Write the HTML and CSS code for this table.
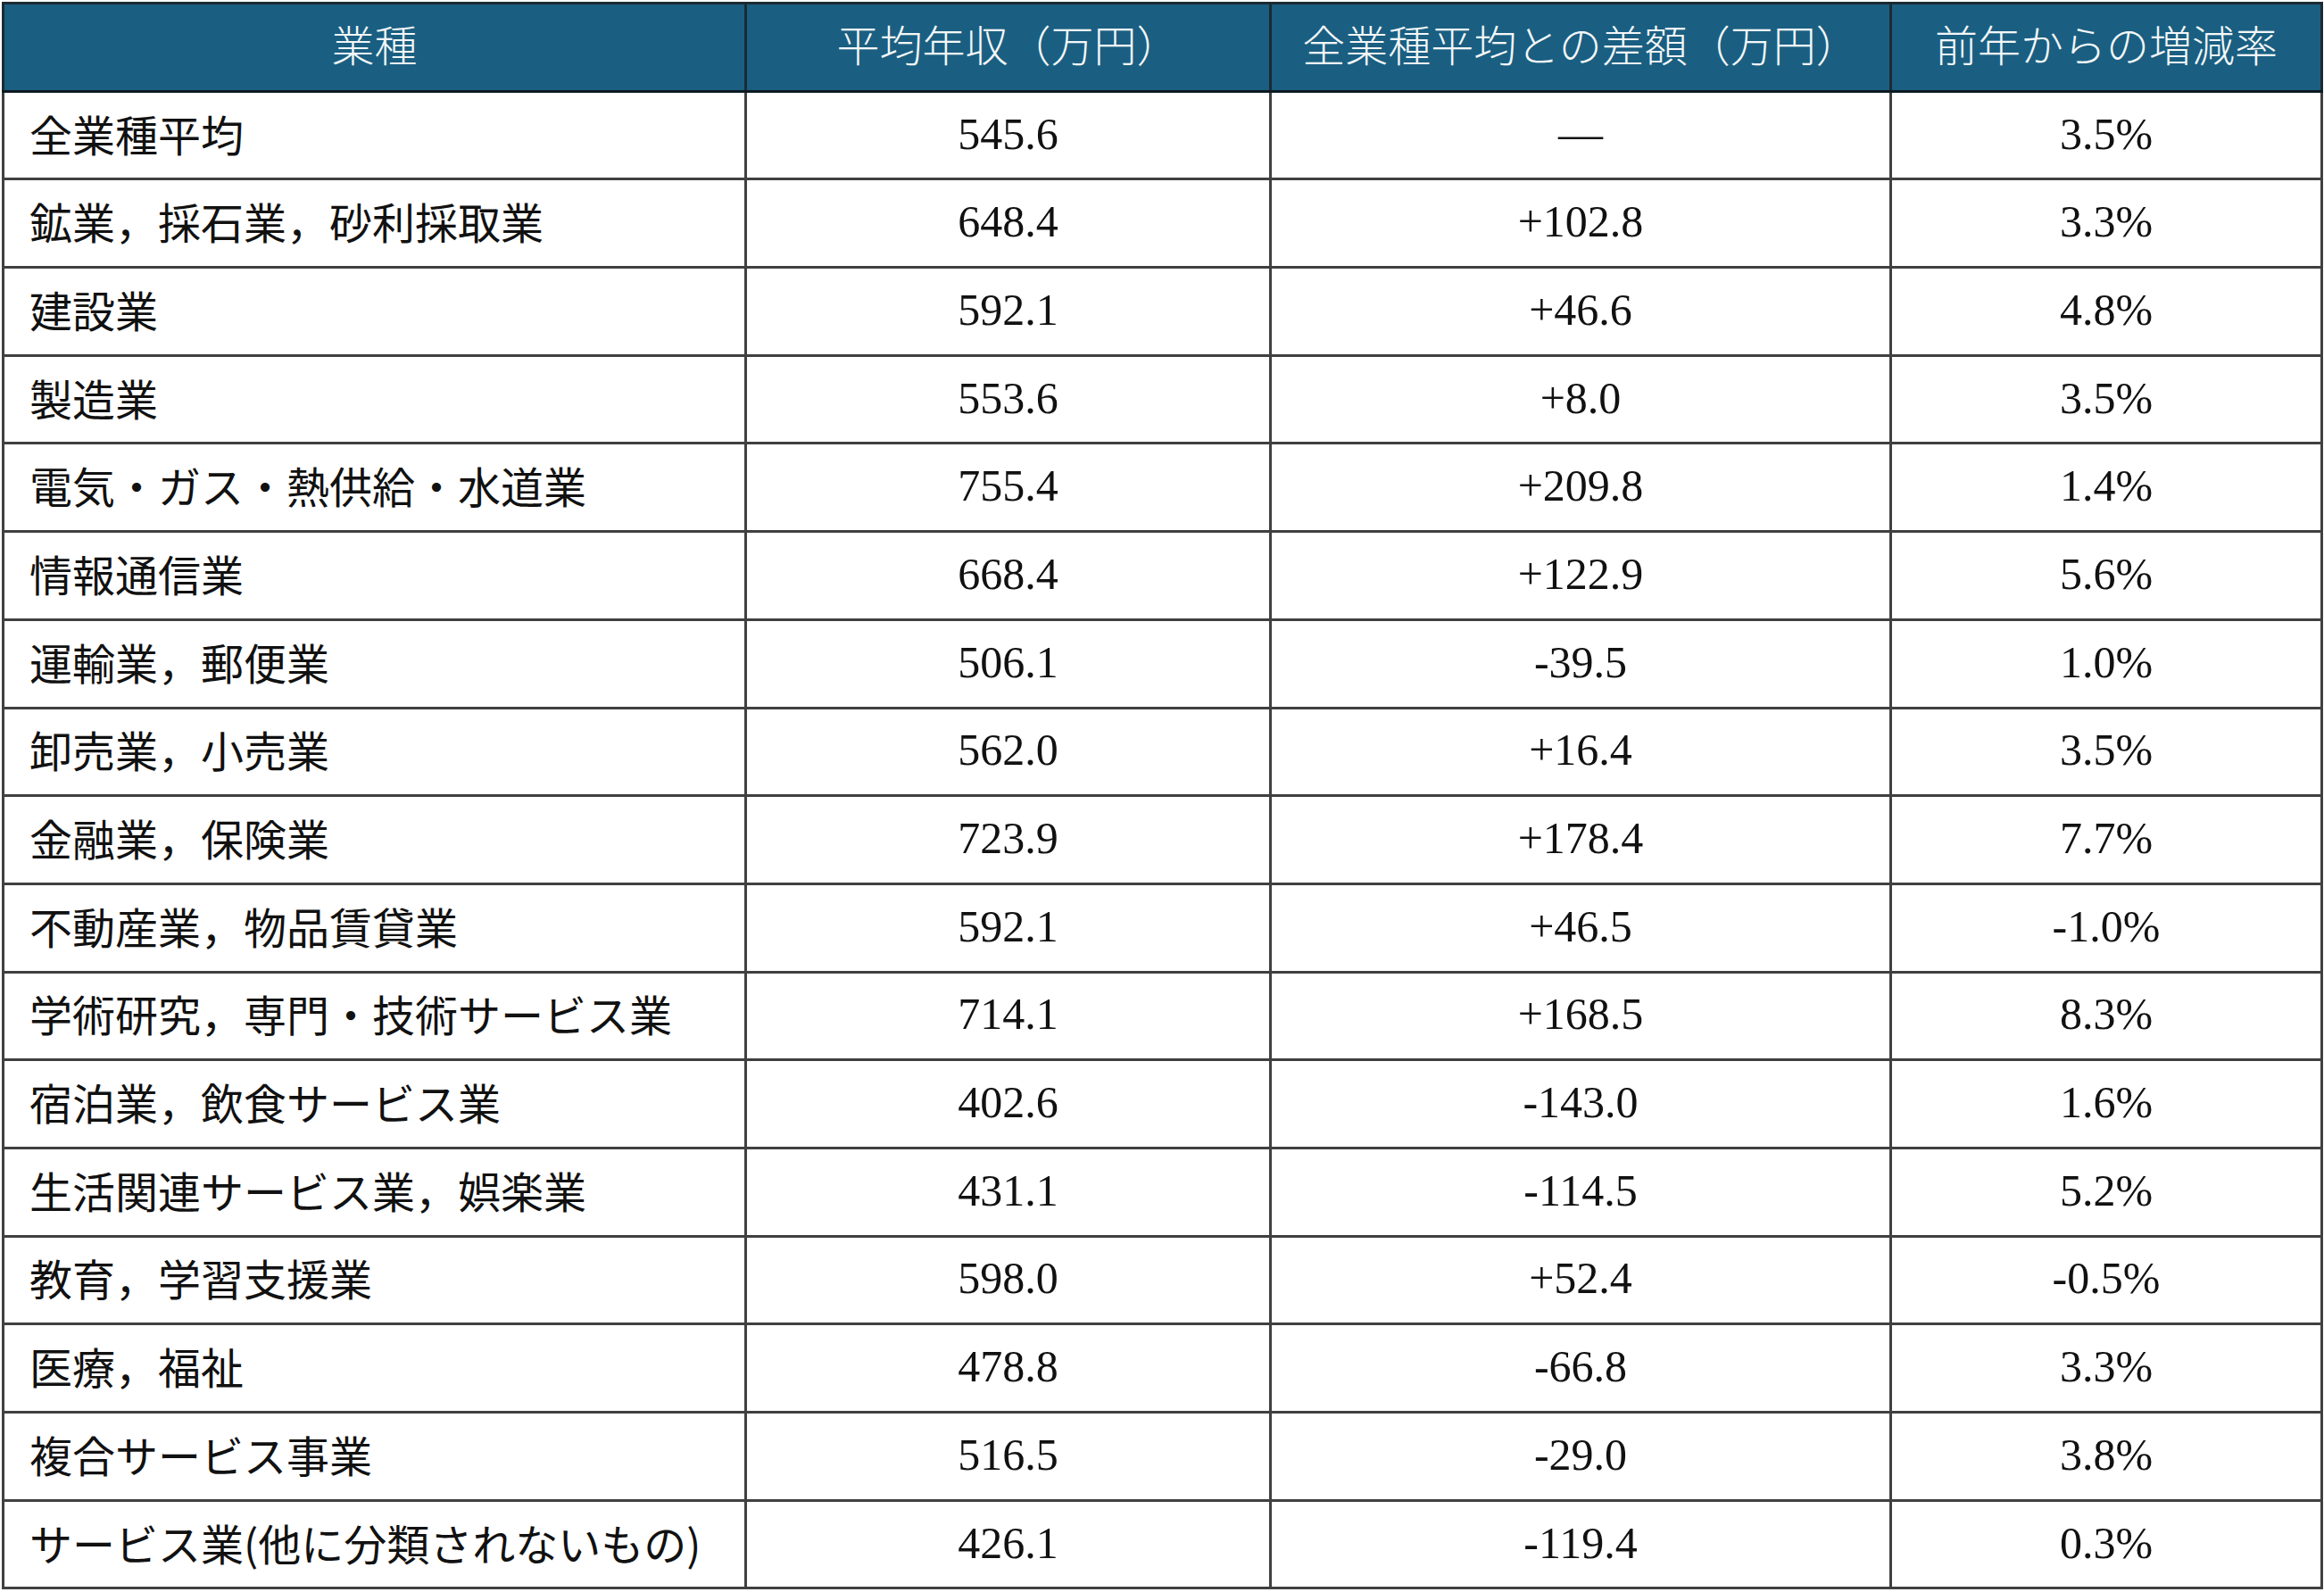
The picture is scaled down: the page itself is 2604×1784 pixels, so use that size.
FILE: index.html
```html
<!DOCTYPE html>
<html lang="ja">
<head>
<meta charset="utf-8">
<title>業種別平均年収</title>
<link rel="stylesheet" href="styles.css">
</head>
<body>
<table class="salary">
  <colgroup>
    <col class="c1"><col class="c2"><col class="c3"><col class="c4">
  </colgroup>
  <thead>
    <tr><th>業種</th><th>平均年収（万円）</th><th>全業種平均との差額（万円）</th><th>前年からの増減率</th></tr>
  </thead>
  <tbody>
    <tr><td class="name">全業種平均</td><td class="num">545.6</td><td class="num">—</td><td class="num">3.5%</td></tr>
    <tr><td class="name">鉱業，採石業，砂利採取業</td><td class="num">648.4</td><td class="num">+102.8</td><td class="num">3.3%</td></tr>
    <tr><td class="name">建設業</td><td class="num">592.1</td><td class="num">+46.6</td><td class="num">4.8%</td></tr>
    <tr><td class="name">製造業</td><td class="num">553.6</td><td class="num">+8.0</td><td class="num">3.5%</td></tr>
    <tr><td class="name">電気・ガス・熱供給・水道業</td><td class="num">755.4</td><td class="num">+209.8</td><td class="num">1.4%</td></tr>
    <tr><td class="name">情報通信業</td><td class="num">668.4</td><td class="num">+122.9</td><td class="num">5.6%</td></tr>
    <tr><td class="name">運輸業，郵便業</td><td class="num">506.1</td><td class="num">-39.5</td><td class="num">1.0%</td></tr>
    <tr><td class="name">卸売業，小売業</td><td class="num">562.0</td><td class="num">+16.4</td><td class="num">3.5%</td></tr>
    <tr><td class="name">金融業，保険業</td><td class="num">723.9</td><td class="num">+178.4</td><td class="num">7.7%</td></tr>
    <tr><td class="name">不動産業，物品賃貸業</td><td class="num">592.1</td><td class="num">+46.5</td><td class="num">-1.0%</td></tr>
    <tr><td class="name">学術研究，専門・技術サービス業</td><td class="num">714.1</td><td class="num">+168.5</td><td class="num">8.3%</td></tr>
    <tr><td class="name">宿泊業，飲食サービス業</td><td class="num">402.6</td><td class="num">-143.0</td><td class="num">1.6%</td></tr>
    <tr><td class="name">生活関連サービス業，娯楽業</td><td class="num">431.1</td><td class="num">-114.5</td><td class="num">5.2%</td></tr>
    <tr><td class="name">教育，学習支援業</td><td class="num">598.0</td><td class="num">+52.4</td><td class="num">-0.5%</td></tr>
    <tr><td class="name">医療，福祉</td><td class="num">478.8</td><td class="num">-66.8</td><td class="num">3.3%</td></tr>
    <tr><td class="name">複合サービス事業</td><td class="num">516.5</td><td class="num">-29.0</td><td class="num">3.8%</td></tr>
    <tr><td class="name">サービス業(他に分類されないもの)</td><td class="num">426.1</td><td class="num">-119.4</td><td class="num">0.3%</td></tr>
  </tbody>
</table>
</body>
</html>
```

FILE: styles.css
```css
html, body {
  margin: 0;
  padding: 0;
  background: #ffffff;
}

body {
  padding: 2px 0 0 2px;
}

.salary {
  border-collapse: collapse;
  table-layout: fixed;
  width: 2598px;
  font-family: "Liberation Serif", "Noto Sans CJK JP", serif;
  color: #111111;
}

.c1 { width: 832px; }
.c2 { width: 588px; }
.c3 { width: 695px; }
.c4 { width: 483px; }

.salary tr {
  height: 98.7px;
}

.salary th,
.salary td {
  border: 3px solid #404040;
  padding: 0 0 6px 0;
  vertical-align: middle;
  white-space: nowrap;
}

.salary th {
  background: #1a5f81;
  color: #f4f7f9;
  font-family: "Noto Sans CJK JP", sans-serif;
  font-weight: 300;
  font-size: 48px;
  text-align: center;
  border-color: #1c2a33;
  border-bottom-color: #0d1a22;
  padding-bottom: 10px;
}

.salary td.name {
  font-family: "Noto Sans CJK JP", sans-serif;
  font-weight: 400;
  font-size: 48px;
  text-align: left;
  padding-left: 28px;
}

.salary td.num {
  font-size: 50px;
  text-align: center;
  padding-bottom: 4px;
}
```
